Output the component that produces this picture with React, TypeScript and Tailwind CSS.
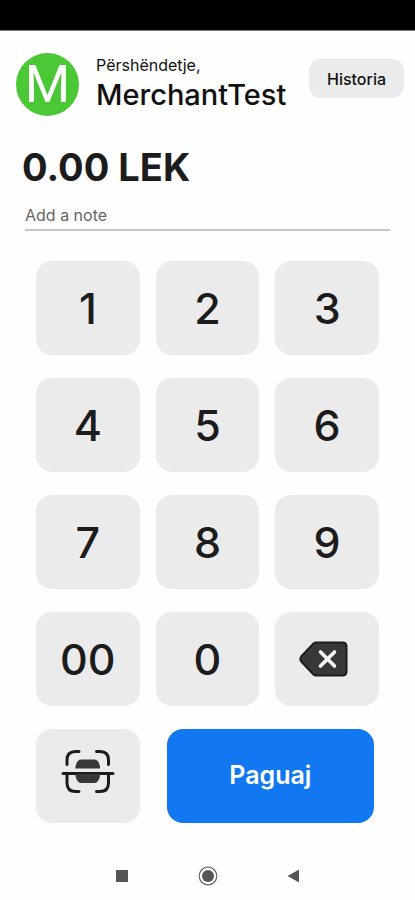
import { useState } from "react";

const digits = ["1", "2", "3", "4", "5", "6", "7", "8", "9", "00", "0"];

const keyClass = "flex h-[94px] items-center justify-center rounded-2xl bg-[#ebebeb] text-[#1c1c1c]";

function BackspaceIcon() {
    return (
        <svg width="56" height="38" viewBox="0 0 56 38" aria-hidden="true">
            <path
                d="M17 2.5H43.5Q47.5 2.5 47.5 6.5V31.5Q47.5 35.5 43.5 35.5H17Q15.5 35.5 14.5 34.5L2.2 21.5Q0.5 19 2.2 16.5L14.5 3.5Q15.5 2.5 17 2.5Z"
                fill="#383838"
                stroke="#1c1c1c"
                strokeWidth="2"
                strokeLinejoin="round"
            />
            <path d="M21.5 12L35.5 26M35.5 12L21.5 26" stroke="#f5f5f5" strokeWidth="3.6" strokeLinecap="round" />
        </svg>
    );
}

function ScanIcon() {
    return (
        <svg width="54" height="56" viewBox="0 0 54 56" fill="none" aria-hidden="true">
            <g stroke="#1c1c1c" strokeWidth="3" strokeLinecap="round">
                <path d="M6 16.5V12Q6 3.5 14.5 3.5H18" />
                <path d="M35.5 3.5H39Q47.5 3.5 47.5 12V16.5" />
                <path d="M6 27V35Q6 43.5 14.5 43.5H18" />
                <path d="M35.5 43.5H39Q47.5 43.5 47.5 35V27" />
                <path d="M2 25.5H52" />
            </g>
            <path d="M14.5 20.5V18.5Q16 11.5 20 11.5H33.5Q37.5 11.5 39 18.5V20.5Z" fill="#383838" />
            <path d="M14.5 26V28Q16 35 20 35H33.5Q37.5 35 39 28V26Z" fill="#383838" />
        </svg>
    );
}

export default function App() {
    const [cents, setCents] = useState("");

    const amount = (Number(cents || "0") / 100).toFixed(2);

    return (
        <div className="flex min-h-screen flex-col bg-[#fefefe] font-['Inter','Liberation_Sans',sans-serif] text-[#111111]">
            <div className="h-[31px] border-b border-[#777777] bg-black"></div>

            <header className="flex items-start pt-[22px] pr-[11px] pl-4">
                <div className="flex size-[63px] shrink-0 items-center justify-center rounded-full bg-[#4bc836] font-['Roboto',sans-serif] text-[52px] leading-none text-white">
                    M
                </div>
                <div className="ml-[17px] grow">
                    <p className="text-base leading-6">Përshëndetje,</p>
                    <h1 className="text-[29px] leading-9 font-medium">MerchantTest</h1>
                </div>
                <button type="button" className="mt-[6px] h-[39px] w-[95px] shrink-0 rounded-xl bg-[#ebebeb] text-base font-medium">
                    Historia
                </button>
            </header>

            <main className="flex grow flex-col">
                <p className="mt-[29px] px-[22px] text-[38px] leading-[44px] font-bold text-[#1c1c1c]">{amount} LEK</p>
                <div className="mx-[25px] mt-3">
                    <input
                        type="text"
                        aria-label="Add a note"
                        placeholder="Add a note"
                        className="block h-[30px] w-full border-b-2 border-[#c4c8c6] bg-transparent text-base outline-none placeholder:text-[#666666]"
                    />
                </div>

                <div className="mt-[30px] grid grid-cols-3 gap-x-4 gap-y-[23px] px-9">
                    {digits.map((digit) => (
                        <button
                            key={digit}
                            type="button"
                            onClick={() => setCents((cents + digit).slice(0, 9))}
                            className={`${keyClass} text-[43px] font-medium`}
                        >
                            {digit}
                        </button>
                    ))}
                    <button type="button" aria-label="Backspace" onClick={() => setCents(cents.slice(0, -1))} className={keyClass}>
                        <BackspaceIcon />
                    </button>
                    <button type="button" aria-label="Scan" className={keyClass}>
                        <ScanIcon />
                    </button>
                    <div className="col-span-2 flex pr-[5px] pl-[11px]">
                        <button type="button" className="grow rounded-2xl bg-[#1278f2] text-[25px] font-semibold text-white">
                            Paguaj
                        </button>
                    </div>
                </div>
            </main>

            <nav className="flex h-[50px] items-center justify-center gap-[66px] border-t border-[#f8f8f8]">
                <button type="button" aria-label="Recent apps">
                    <svg width="20" height="20" viewBox="0 0 20 20">
                        <rect x="4" y="4" width="12" height="12" fill="#555555" />
                    </svg>
                </button>
                <button type="button" aria-label="Home">
                    <svg width="20" height="20" viewBox="0 0 20 20">
                        <circle cx="10" cy="10" r="8.8" fill="none" stroke="#666666" strokeWidth="1.2" />
                        <circle cx="10" cy="10" r="6" fill="#555555" />
                    </svg>
                </button>
                <button type="button" aria-label="Back">
                    <svg width="20" height="20" viewBox="0 0 20 20">
                        <path d="M15 3.5V16.5L3.5 10Z" fill="#555555" />
                    </svg>
                </button>
            </nav>
        </div>
    );
}
